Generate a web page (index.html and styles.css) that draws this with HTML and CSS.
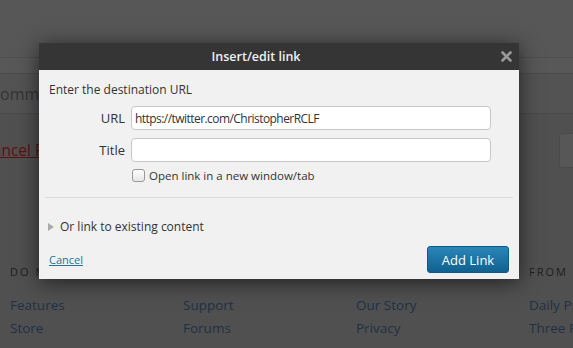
FILE: index.html
```html
<!DOCTYPE html>
<html lang="en">
<head>
  <meta charset="UTF-8" />
  <title>Insert/edit link</title>
  <link rel="stylesheet" href="styles.css">
</head>
<body>
  <div class="page">
    <div class="topbar"></div>
    <div class="strip"></div>
    <div class="comment-row"><span class="comment-text">Comma</span></div>
    <div class="post-row">
      <a href="#" class="cancel-post">Cancel Post</a>
      <span class="post-btn"></span>
    </div>
    <div class="footer">
      <div class="col">
        <h4>DO MORE</h4>
        <a href="#">Features</a>
        <a href="#">Store</a>
      </div>
      <div class="col">
        <h4>&nbsp;</h4>
        <a href="#">Support</a>
        <a href="#">Forums</a>
      </div>
      <div class="col">
        <h4>&nbsp;</h4>
        <a href="#">Our Story</a>
        <a href="#">Privacy</a>
      </div>
      <div class="col">
        <h4>FROM OUR</h4>
        <a href="#">Daily Prompt</a>
        <a href="#">Three Row</a>
      </div>
    </div>
  </div>

  <div class="dialog">
    <div class="dialog-title">
      Insert/edit link
      <svg class="close" width="11" height="11" viewBox="0 0 11 11">
        <path d="M1.5 1.5 L9.5 9.5 M9.5 1.5 L1.5 9.5" stroke="#9a9a9a" stroke-width="2.6" stroke-linecap="round" />
      </svg>
    </div>
    <div class="dialog-body">
      <p class="intro">Enter the destination URL</p>
      <div class="field">
        <label>URL</label>
        <input type="text" value="https://twitter.com/ChristopherRCLF">
      </div>
      <div class="field">
        <label>Title</label>
        <input type="text" value="">
      </div>
      <div class="check">
        <span class="box"></span>
        Open link in a new window/tab
      </div>
      <div class="sep"></div>
      <div class="toggle">
        <span class="arrow"></span>
        Or link to existing content
      </div>
    </div>
    <div class="dialog-foot">
      <a href="#" class="cancel">Cancel</a>
      <button class="add">Add Link</button>
    </div>
  </div>
</body>
</html>
```

FILE: styles.css
```css
body, html {
  margin: 0;
  padding: 0;
  background: #505050;
  font-family: 'Open Sans', sans-serif;
  overflow: hidden;
}
.page {
  width: 573px;
  height: 348px;
}
.topbar {
  height: 57px;
  background: #575757;
}
.strip {
  height: 15px;
  background: #585858;
  border-top: 1px solid #4f4f4f;
  border-bottom: 1px solid #4b4b4b;
}
.comment-row {
  height: 39px;
  background: #535353;
  border-bottom: 1px solid #4a4a4a;
  display: flex;
  align-items: center;
}
.comment-text {
  margin-left: -10px;
  font-size: 16px;
  color: #333;
}
.post-row {
  display: flex;
  align-items: center;
  justify-content: space-between;
  margin-top: 19px;
  height: 34px;
}
.cancel-post {
  margin-left: -17px;
  font-size: 15.5px;
  color: #5e1010;
}
.post-btn {
  width: 40px;
  height: 33px;
  margin-right: -28px;
  background: #575757;
  border: 1px solid #4a4a4a;
  border-radius: 3px;
}
.footer {
  display: flex;
  padding: 97px 0 0 10px;
}
.col {
  width: 173px;
  flex: none;
}
.col h4 {
  margin: 0 0 15px;
  font-size: 11px;
  font-weight: 400;
  letter-spacing: 2px;
  color: #1e1e1e;
}
.col a {
  display: block;
  font-size: 13.5px;
  line-height: 23px;
  color: #1f3045;
  text-decoration: none;
}

.dialog {
  position: absolute;
  left: 39px;
  top: 43px;
  width: 480px;
  height: 236px;
  background: #f1f1f1;
  box-shadow: 0 3px 20px rgba(0, 0, 0, 0.6);
}
.dialog-title {
  position: relative;
  height: 27px;
  line-height: 27px;
  padding-right: 46px;
  background: #353535;
  color: #f0f0f0;
  font-size: 12.5px;
  font-weight: 600;
  text-align: center;
}
.close {
  position: absolute;
  right: 7px;
  top: 8px;
}
.dialog-body {
  padding: 11px 6px 0;
  font-size: 12px;
  color: #333;
}
.intro {
  margin: 0 0 8px 4px;
}
.field {
  display: flex;
  align-items: center;
  margin-bottom: 8px;
}
.field label {
  width: 80px;
  text-align: right;
  font-size: 13px;
  margin-right: 6px;
}
.field input {
  width: 360px;
  height: 24px;
  box-sizing: border-box;
  border: 1px solid #c8c8c8;
  border-radius: 4px;
  background: #fff;
  padding: 0 3px;
  font-family: 'Open Sans', sans-serif;
  font-size: 12px;
  letter-spacing: -0.55px;
  color: #333;
}
.check {
  display: flex;
  align-items: center;
  margin: -2px 0 0 87px;
  height: 14px;
  font-size: 11.5px;
}
.box {
  width: 11px;
  height: 11px;
  border: 1px solid #999;
  border-radius: 3px;
  background: linear-gradient(#fff, #e6e6e6);
  margin-right: 4px;
}
.sep {
  height: 1px;
  background: #dadada;
  margin: 15px 0 0;
}
.toggle {
  display: flex;
  align-items: center;
  margin: 20px 0 0 3px;
  font-size: 12px;
}
.arrow {
  width: 0;
  height: 0;
  border-left: 6px solid #aaa;
  border-top: 4px solid transparent;
  border-bottom: 4px solid transparent;
  margin-right: 6px;
}
.dialog-foot {
  display: flex;
  align-items: center;
  justify-content: space-between;
  padding: 0 10px;
  position: absolute;
  left: 0;
  right: 0;
  bottom: 6px;
}
.cancel {
  font-size: 11px;
  color: #21759b;
}
.add {
  width: 82px;
  height: 27px;
  border: 1px solid #0e5a86;
  border-radius: 3px;
  background: linear-gradient(#2a86b9, #10618f);
  color: #fff;
  font-family: 'Open Sans', sans-serif;
  font-size: 13px;
}
```
